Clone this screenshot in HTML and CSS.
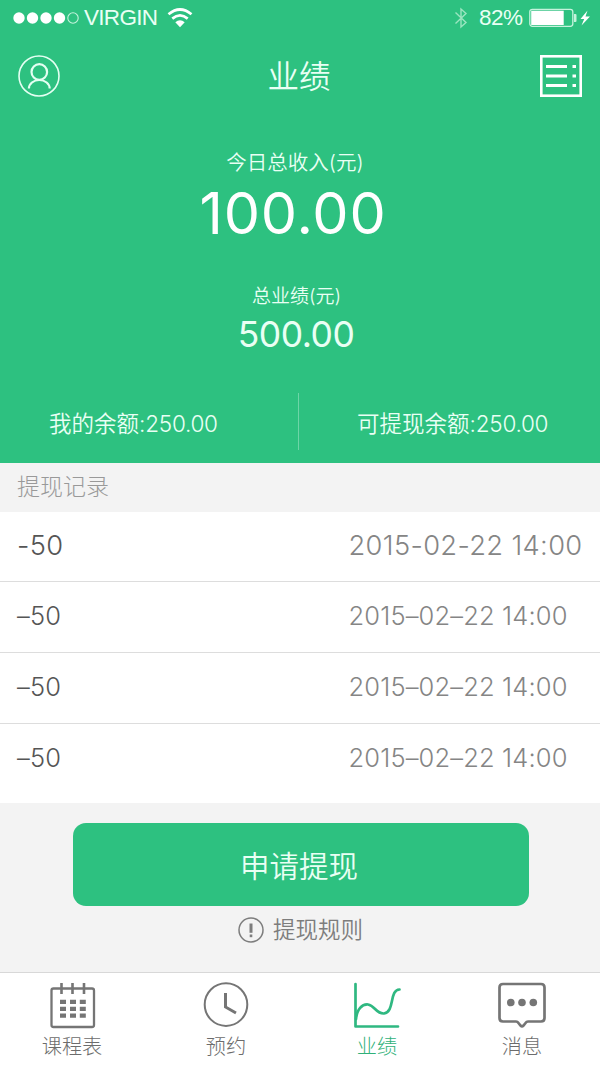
FILE: index.html
```html
<!DOCTYPE html>
<html lang="zh-CN">
<head>
<meta charset="utf-8">
<title>业绩</title>
<link rel="stylesheet" href="styles.css">
</head>
<body>
<div class="app">
  <header class="hero">
    <div class="status">
      <svg class="signal" width="66" height="14" viewBox="0 0 66 14"><g fill="#fff"><circle cx="6" cy="7" r="5.7"/><circle cx="19.5" cy="7" r="5.7"/><circle cx="33" cy="7" r="5.7"/><circle cx="46.500" cy="7" r="5.7"/></g><circle cx="60" cy="7" r="5.2" fill="none" stroke="#c5f3dc" stroke-width="1.1"/></svg>
      <span class="carrier">VIRGIN</span>
      <svg class="wifi" width="26" height="20" viewBox="0 0 26 20"><g fill="none" stroke="#fff" stroke-width="2.700"><path d="M1.500 6.300Q13-3.300 24.500 6.300"/><path d="M5.300 10.600Q13 4.200 20.700 10.600"/></g><path d="M8.300 14.200Q13 10.300 17.700 14.200L13 19.300z" fill="#fff"/></svg>
      <svg class="bluetooth" width="14" height="22" viewBox="0 0 14 22"><path d="M1.500 5.500L12 15.500L7 20V2L12 6.500L1.500 16.500" fill="none" stroke="#9be5c0" stroke-width="1.400"/></svg>
      <span class="percent">82%</span>
      <svg class="battery" width="62" height="20" viewBox="0 0 62 20"><rect x=".8" y="1.300" width="43" height="17" rx="2.500" fill="none" stroke="#c5f3dc" stroke-width="1.300"/><rect x="2.200" y="2.700" width="32.500" height="14.300" fill="#fff"/><path d="M45 6h1.500q1 0 1 1v6q0 1-1 1H45z" fill="#c5f3dc"/><path d="M58.500 2.500L51.500 11h3.700L52.500 17.500L61 8.500h-4.500z" fill="#fff"/></svg>
    </div>
    <div class="navbar">
      <svg width="42" height="42" viewBox="0 0 42 42" fill="none" stroke="#e4fff2"><circle cx="21" cy="21" r="20" stroke-width="1.600"/><circle cx="21.300" cy="17" r="7.800" stroke-width="2.200"/><path d="M10.900 33.500a10.400 8.500 0 0 1 20.800 0" stroke-width="2.200"/></svg>
      <h1 class="title">业绩</h1>
      <svg width="42" height="42" viewBox="0 0 42 42"><rect x="1.300" y="1.300" width="39.400" height="39.400" fill="none" stroke="#fff" stroke-width="2.600"/><path d="M6 11.500h21M6 21h21M6 30.500h21M32.500 11.500h3.500M32.500 21h3.500M32.500 30.500h3.500" stroke="#fff" stroke-width="3"/></svg>
    </div>
    <div class="today-label">今日总收入(元)</div>
    <div class="today-value">100.00</div>
    <div class="total-label">总业绩(元)</div>
    <div class="total-value">500.00</div>
    <div class="balances">
      <div class="balance">我的余额:<span class="num">250.00</span></div>
      <div class="balance balance-right">可提现余额:<span class="num">250.00</span></div>
    </div>
  </header>
  <h2 class="section">提现记录</h2>
  <ul class="records">
    <li class="record record-first"><span class="amount">-50</span><time class="date">2015-02-22 14:00</time></li>
    <li class="record"><span class="amount">–50</span><time class="date">2015–02–22 14:00</time></li>
    <li class="record"><span class="amount">–50</span><time class="date">2015–02–22 14:00</time></li>
    <li class="record"><span class="amount">–50</span><time class="date">2015–02–22 14:00</time></li>
  </ul>
  <div class="actions">
    <button class="withdraw">申请提现</button>
    <div class="rules">
      <svg width="26" height="26" viewBox="0 0 26 26"><circle cx="13" cy="13" r="12" fill="none" stroke="#7d7d7d" stroke-width="1.500"/><path d="M13 6.500v9.300" stroke="#7d7d7d" stroke-width="3"/><path d="M13 17.500v2.700" stroke="#7d7d7d" stroke-width="2.600"/></svg>
      <span>提现规则</span>
    </div>
  </div>
  <nav class="tabs">
    <a class="tab tab-schedule">
      <svg width="48" height="48" viewBox="0 0 48 48"><g fill="none" stroke="#757575" stroke-width="2.300"><rect x="3.500" y="6.500" width="42.500" height="38.500" rx="2"/><path d="M13.500 1v11M24.500 1v11M36 1v11" stroke-width="2.600"/></g><path d="M12 19.800h6M22 19.800h6M31.800 19.800h6M12 26.800h6M22 26.800h6M31.800 26.800h6M12 33.700h6M22 33.700h6M31.800 33.700h6" stroke="#757575" stroke-width="4.200"/></svg>
      <span>课程表</span>
    </a>
    <a class="tab tab-booking">
      <svg width="48" height="48" viewBox="0 0 48 48" fill="none" stroke="#757575"><circle cx="24" cy="22.600" r="21.300" stroke-width="2"/><path d="M23.500 11v14l10.500 6" stroke-width="3"/></svg>
      <span>预约</span>
    </a>
    <a class="tab tab-results">
      <svg width="48" height="48" viewBox="0 0 48 48" fill="none" stroke="#2fb881" stroke-width="2.700" stroke-linecap="round" stroke-linejoin="round"><path d="M2.500 2v42.500H45"/><path d="M3 37C4 27 9 22 15 22.500C22 23.500 23 32 31 31.500C42 30 36 8 46.500 7.500"/></svg>
      <span>业绩</span>
    </a>
    <a class="tab tab-messages">
      <svg width="48" height="48" viewBox="0 0 48 48"><path d="M5 2H43Q46.500 2 46.500 5.500V36Q46.500 39.500 43 39.500H30Q28.500 39.500 27.500 41L25.500 43.500Q24 45 22.500 43.500L20.500 41Q19.500 39.500 18 39.500H5Q1.500 39.500 1.500 36V5.500Q1.500 2 5 2z" fill="none" stroke="#757575" stroke-width="2.700"/><g fill="#757575"><circle cx="12.800" cy="20.500" r="3.800"/><circle cx="24" cy="20.500" r="3.800"/><circle cx="35.300" cy="20.500" r="3.800"/></g></svg>
      <span>消息</span>
    </a>
  </nav>
</div>
</body>
</html>
```
FILE: styles.css
```css
* { box-sizing: border-box; margin: 0; padding: 0; }
body { width: 600px; font-family: "Inter", "Noto Sans CJK SC", sans-serif; font-weight: 300; background: #fff; }
svg { display: block; flex: none; }
.app { width: 600px; height: 1065px; overflow: hidden; display: flex; flex-direction: column; }
.hero { height: 463px; flex: none; background: #2dc180; color: #e9fff4; text-align: center; display: flex; flex-direction: column; }
.status { height: 36px; flex: none; display: flex; align-items: center; padding-left: 13px; font: 400 22.5px/36px "Liberation Sans", sans-serif; }
.carrier { width: 73px; margin-left: 5px; letter-spacing: -0.7px; text-align: left; white-space: nowrap; }
.wifi { margin-left: 10px; }
.bluetooth { margin-left: 261px; }
.percent { width: 44px; margin-left: 11px; letter-spacing: -0.5px; text-align: left; }
.battery { margin-left: 6px; }
.navbar { height: 80px; flex: none; display: flex; justify-content: space-between; align-items: center; padding: 0 18px; }
.title { font-size: 31.5px; font-weight: 350; line-height: 40px; padding-top: 2px; padding-right: 2px; }
.today-label { margin-top: 32px; height: 30px; line-height: 30px; font-size: 20.5px; font-weight: 350; padding-right: 10px; }
.today-value { height: 70px; line-height: 70px; font-size: 57.5px; font-weight: 400; letter-spacing: 0.8px; padding-right: 14px; color: #fff; }
.total-label { margin-top: 34px; height: 30px; line-height: 30px; font-size: 19px; font-weight: 350; padding-right: 7px; }
.total-value { height: 48px; line-height: 46px; font-size: 35.5px; font-weight: 400; letter-spacing: -0.5px; padding-right: 8px; }
.balances { display: flex; margin-top: 33px; height: 57px; line-height: 61px; font-size: 22.5px; font-weight: 350; text-align: left; }
.balance { width: 299px; padding-left: 49px; border-right: 1px solid #6dd5a7; white-space: nowrap; }
.balance-right { padding-left: 58px; border: 0; }
.num { font-weight: 300; letter-spacing: -0.3px; }
.section { height: 49px; flex: none; padding-left: 17px; background: #f3f3f3; color: #999; font-size: 23px; font-weight: 300; line-height: 49px; }
.records { flex: none; height: 291px; list-style: none; }
.record { height: 71px; line-height: 67px; display: flex; padding-left: 17px; font-size: 25.5px; letter-spacing: 0.15px; border-bottom: 1px solid #ddd; color: #555; }
.record:last-child { border: 0; height: 79px; }
.record-first { height: 70px; line-height: 67px; font-size: 27.3px; letter-spacing: 0.35px; }
.amount { width: 331.5px; }
.date { color: #858585; white-space: nowrap; }
.actions { height: 169px; flex: none; background: #f3f3f3; padding-top: 20px; padding-left: 2px; display: flex; flex-direction: column; align-items: center; }
.withdraw { width: 456px; height: 83px; flex: none; border: 0; border-radius: 13px; background: #2dc180; color: #e9fff4; font: 350 29.500px/83px "Noto Sans CJK SC", sans-serif; padding-right: 4px; }
.rules { display: flex; align-items: center; gap: 9px; height: 48px; font-size: 22.500px; font-weight: 350; line-height: 50px; color: #7d7d7d; padding-right: 1px; }
.tabs { height: 93px; flex: none; border-top: 1px solid #d8d8d8; display: flex; padding-left: 32px; color: #6c6c6c; font-size: 20.2px; }
.tab { display: flex; flex-direction: column; align-items: center; padding-top: 9px; width: 80px; }
.tab span { line-height: 33px; }
.tab-booking { margin-left: 74px; }
.tab-results { margin-left: 71px; color: #2fb179; }
.tab-messages { margin-left: 65px; }
```
